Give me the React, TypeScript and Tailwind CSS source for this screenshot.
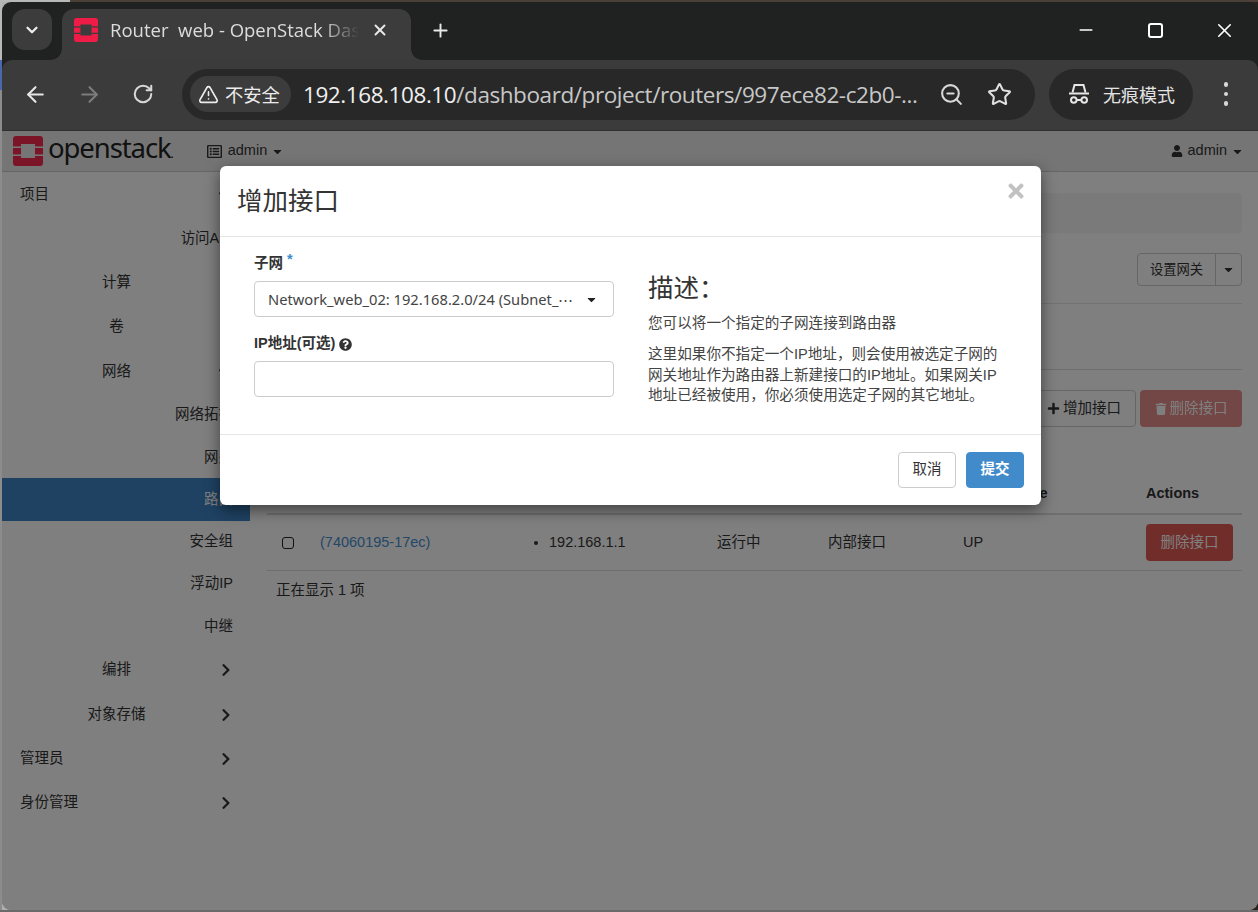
import { ArrowLeft, ArrowRight, RotateCw, TriangleAlert, Star, X, Plus, Minus, ChevronDown, ZoomOut } from "lucide-react";
import { FaRegListAlt, FaUser, FaCaretDown, FaChevronRight, FaChevronDown, FaPlus, FaTrash, FaQuestionCircle, FaTimes } from "react-icons/fa";

function Logo({ className, gap }: { className: string; gap: string }) {
  return (
    <svg viewBox="0 0 30 30" className={className}>
      <path fillRule="evenodd" fill="currentColor" d="M3 0h24a3 3 0 0 1 3 3v24a3 3 0 0 1-3 3H3a3 3 0 0 1-3-3V3a3 3 0 0 1 3-3zM8 8v14h14V8z" />
      <rect x="0" y="10.4" width="8" height="1.6" fill={gap} />
      <rect x="0" y="18.4" width="8" height="1.6" fill={gap} />
      <rect x="22" y="10.4" width="8" height="1.6" fill={gap} />
      <rect x="22" y="18.4" width="8" height="1.6" fill={gap} />
    </svg>
  );
}

function Incognito() {
  return (
    <svg viewBox="0 0 24 24" className="w-[24px] h-[24px] text-[#e6e6e6]" fill="none" stroke="currentColor" strokeWidth="2">
      <path d="M5.5 10.5 7.5 3h9l2 7.5" />
      <path d="M2 11.5h20" />
      <circle cx="6.8" cy="18" r="2.8" />
      <circle cx="17.2" cy="18" r="2.8" />
      <path d="M9.6 18h4.8" />
    </svg>
  );
}

const nav: { t: string; lvl: 1 | 2 | 3; h: string; arrow?: "r" | "d"; active?: boolean }[] = [
  { t: "项目", lvl: 1, h: "h-[44px] pt-[2px]", arrow: "d" },
  { t: "访问API", lvl: 3, h: "h-[44px] pt-[2px]" },
  { t: "计算", lvl: 2, h: "h-[44px] pt-[2px]" },
  { t: "卷", lvl: 2, h: "h-[44px] pt-[2px]" },
  { t: "网络", lvl: 2, h: "h-[44px] pt-[4px]", arrow: "d" },
  { t: "网络拓扑", lvl: 3, h: "h-[43px] pt-[2px]" },
  { t: "网关", lvl: 3, h: "h-[43px] pt-[2px]" },
  { t: "路由", lvl: 3, h: "h-[43px]", active: true },
  { t: "安全组", lvl: 3, h: "h-[42px]" },
  { t: "浮动IP", lvl: 3, h: "h-[42px]" },
  { t: "中继", lvl: 3, h: "h-[43px]" },
  { t: "编排", lvl: 2, h: "h-[44px]", arrow: "r" },
  { t: "对象存储", lvl: 2, h: "h-[44px] pt-[2px]", arrow: "r" },
  { t: "管理员", lvl: 1, h: "h-[44px] pt-[2px]", arrow: "r" },
  { t: "身份管理", lvl: 1, h: "h-[44px] pt-[2px]", arrow: "r" },
];

const cols = "grid grid-cols-[45px_217px_180px_111px_135px_183px_104px] items-center";

export default function App() {
  return (
    <div className="w-[1258px] h-[912px] overflow-hidden flex flex-col bg-[#2a2420] [font-family:'Liberation_Sans','Noto_Sans_CJK_SC',sans-serif] text-[14.5px] text-[#333]">
      <div className="h-[2px] shrink-0 bg-[linear-gradient(90deg,#b8b8b8_70px,#4a4038_70px)]" />
      <div className="flex h-[908px] shrink-0 bg-[linear-gradient(90deg,#b0b0b0_50%,#2a2420_50%)]">
        <div className="w-[2px] shrink-0 flex flex-col">
          <div className="h-[58px] bg-[#b8b8b8]" />
          <div className="h-[30px] bg-[#4a67b0]" />
          <div className="flex-1 bg-[#8c8c8c]" />
        </div>
        <div className="flex-1 flex flex-col rounded-t-[9px] rounded-b-[9px] overflow-hidden bg-[#202221]">
          {/* tab strip */}
          <div className="h-[58px] shrink-0 flex pl-[10px] pt-[7px] [font-family:'Open_Sans','Noto_Sans_CJK_SC',sans-serif] text-[#dcdcdc]">
            <div className="w-[40px] h-[41px] rounded-[13px] bg-[#3c3c3c] flex items-center justify-center">
              <ChevronDown size={18} strokeWidth={3} className="text-[#eeeeee]" />
            </div>
            <div className="relative ml-[10px] w-[349px] h-[51px] rounded-t-[12px] bg-[#3c3c3c] flex items-center pl-[12px] pb-[9px]">
              <div className="absolute left-[-11px] bottom-0 w-[11px] h-[11px] bg-[radial-gradient(circle_at_0_0,#202221_10.5px,#3c3c3c_11px)]" />
              <div className="absolute right-[-11px] bottom-0 w-[11px] h-[11px] bg-[radial-gradient(circle_at_100%_0,#202221_10.5px,#3c3c3c_11px)]" />
              <Logo className="w-[24px] h-[24px] text-[#f01c48] shrink-0" gap="#3c3c3c" />
              <div className="ml-[12px] w-[249px] whitespace-pre overflow-hidden text-[18.5px] leading-[24px] [mask-image:linear-gradient(90deg,#000_85%,transparent)]">Router  web - OpenStack Dashboard</div>
              <X size={18} strokeWidth={2.6} className="ml-[12px] text-[#e8e8e8] shrink-0" />
            </div>
            <div className="ml-[19px] mt-[5px] h-[32px] flex items-center">
              <Plus size={21} strokeWidth={2.2} className="text-[#e8e8e8]" />
            </div>
            <div className="ml-auto flex h-[32px] mt-[5px] text-white">
              <div className="w-[64px] flex items-center justify-center"><Minus size={20} strokeWidth={1.7} /></div>
              <div className="w-[74px] flex items-center justify-center"><div className="w-[15px] h-[15px] border-[2px] border-white rounded-[3px]" /></div>
              <div className="w-[66px] flex items-center justify-center pr-[2px]"><X size={23} strokeWidth={1.7} /></div>
            </div>
          </div>
          {/* toolbar */}
          <div className="h-[71px] shrink-0 rounded-t-[10px] bg-[#3b3b3b] border-b border-b-[#2f2f2f] flex items-center pl-[6px] pb-[2px]">
            <div className="w-[54px] flex justify-center"><ArrowLeft size={25} strokeWidth={2} className="text-[#e6e6e6]" /></div>
            <div className="w-[54px] flex justify-center"><ArrowRight size={25} strokeWidth={2} className="text-[#7c7c7c]" /></div>
            <div className="w-[54px] flex justify-center"><RotateCw size={22} strokeWidth={2.2} className="text-[#d8d8d8]" /></div>
            <div className="ml-[12px] w-[853px] h-[51px] rounded-full bg-[#282828] flex items-center pl-[8px] [font-family:'Open_Sans','Noto_Sans_CJK_SC',sans-serif]">
              <div className="w-[101px] h-[36px] rounded-full bg-[#3c3c3c] flex items-center pl-[8px] text-[#ececec]">
                <TriangleAlert size={21} strokeWidth={1.8} />
                <span className="ml-[6px] mt-[2px] text-[18.3px] leading-none">不安全</span>
              </div>
              <div className="ml-[12px] mt-[1px] w-[618px] whitespace-nowrap text-[22.5px] tracking-[-0.43px] leading-[30px] text-[#c7c7c7]">
                <span className="text-[#f0f0f0]">192.168.108.10</span>/dashboard/project/routers/997ece82-c2b0-...
              </div>
              <ZoomOut size={25} strokeWidth={2} className="ml-[18px] text-[#d8d8d8]" />
              <Star size={25} strokeWidth={2} className="ml-[23px] text-[#e0e0e0]" />
            </div>
            <div className="ml-[14px] w-[144px] h-[51px] rounded-full bg-[#282828] flex items-center pl-[18px] text-[#e3e3e3]">
              <Incognito />
              <span className="ml-[12px] mt-[2px] text-[18px] leading-none [font-family:'Open_Sans','Noto_Sans_CJK_SC',sans-serif]">无痕模式</span>
            </div>
            <div className="ml-[21px] w-[24px] flex flex-col items-center gap-[5px]">
              <div className="w-[4.5px] h-[4.5px] rounded-full bg-[#d8d8d8]" />
              <div className="w-[4.5px] h-[4.5px] rounded-full bg-[#d8d8d8]" />
              <div className="w-[4.5px] h-[4.5px] rounded-full bg-[#d8d8d8]" />
            </div>
          </div>
          {/* page */}
          <div className="relative flex-1 bg-white flex flex-col overflow-hidden">
            <div className="h-[41px] shrink-0 bg-[#ebebeb] border-b border-b-[#cccccc] flex items-center pl-[11px] pr-[14px]">
              <Logo className="w-[30px] h-[30px] text-[#f7284f]" gap="#ebebeb" />
              <span className="ml-[5px] text-[27.5px] leading-[36px] tracking-[-1.1px] text-[#222] [font-family:'Noto_Sans',sans-serif]">openstack<span className="text-[12px]">.</span></span>
              <FaRegListAlt size={15} className="ml-[34px]" />
              <span className="ml-[6px]">admin</span>
              <FaCaretDown size={13} className="ml-[4px]" />
              <FaUser size={12} className="ml-auto" />
              <span className="ml-[5px]">admin</span>
              <FaCaretDown size={13} className="ml-[4px]" />
            </div>
            <div className="flex-1 flex">
              <div className="w-[248px] shrink-0 flex flex-col">
                {nav.map((n) => (
                  <div key={n.t} className={`${n.h} flex items-center ${n.active ? "bg-[#3f85c7] text-white" : ""}`}>
                    {n.lvl === 1 && <div className="w-[229px] pl-[18px]">{n.t}</div>}
                    {n.lvl === 2 && <div className="w-[229px] text-center">{n.t}</div>}
                    {n.lvl === 3 && <div className="w-[231px] text-right">{n.t}</div>}
                    {n.arrow === "r" && <FaChevronRight size={14} className="-ml-[12px]" />}
                    {n.arrow === "d" && <FaChevronDown size={13} className="-ml-[13px]" />}
                  </div>
                ))}
              </div>
              <div className="flex-1 pl-[17px] pr-[16px] pt-[21px] flex flex-col">
                <div className="h-[40px] shrink-0 rounded-[4px] bg-[#f5f5f5]" />
                <div className="mt-[20px] h-[33px] shrink-0 flex justify-end">
                  <div className="w-[105px] rounded-[4px] border border-[#cccccc] flex">
                    <div className="w-[78px] border-r border-r-[#cccccc] flex items-center justify-center text-[13.3px]">设置网关</div>
                    <div className="flex-1 flex items-center justify-center"><FaCaretDown size={13} /></div>
                  </div>
                </div>
                <div className="mt-[17px] h-px shrink-0 bg-[#e5e5e5]" />
                <div className="mt-[65px] h-px shrink-0 bg-[#dddddd]" />
                <div className="mt-[20px] h-[37px] shrink-0 flex justify-end gap-[4px]">
                  <div className="w-[105px] rounded-[4px] border border-[#cccccc] flex items-center pl-[15px] gap-[3px]"><FaPlus size={13} />增加接口</div>
                  <div className="w-[102px] rounded-[4px] bg-[#d9534f] opacity-65 text-white flex items-center justify-center gap-[3px]"><FaTrash size={12} />删除接口</div>
                </div>
                <div className={`${cols} mt-[45px] h-[43px] pt-[3px] shrink-0 border-b-2 border-b-[#dddddd] font-bold`}>
                  <div />
                  <div className="pl-[8px]">Name</div>
                  <div className="pl-[8px]">Fixed IPs</div>
                  <div className="pl-[8px]">Status</div>
                  <div className="pl-[8px]">Type</div>
                  <div className="pl-[8px]">Admin State</div>
                  <div className="pl-[8px]">Actions</div>
                </div>
                <div className={`${cols} h-[56px] shrink-0 border-b border-b-[#dddddd]`}>
                  <div className="pl-[15px]"><div className="w-[12px] h-[12px] rounded-[3px] border-[1.5px] border-[#222]" /></div>
                  <div className="pl-[8px] text-[#4a8fd0]">(74060195-17ec)</div>
                  <div className="pl-[8px] flex items-center"><span className="-ml-[3px] w-[4px] h-[4px] rounded-full bg-[#333] mr-[11px]" />192.168.1.1</div>
                  <div className="pl-[8px]">运行中</div>
                  <div className="pl-[8px]">内部接口</div>
                  <div className="pl-[8px]">UP</div>
                  <div className="pl-[8px]"><div className="w-[87px] h-[37px] rounded-[4px] bg-[#e35a55] text-white flex items-center justify-center">删除接口</div></div>
                </div>
                <div className="mt-[9px] pl-[9px] leading-[20px]">正在显示 1 项</div>
              </div>
            </div>
            {/* backdrop */}
            <div className="absolute inset-0 bg-black/50" />
            {/* modal */}
            <div className="absolute left-[218px] top-[35px] w-[821px] h-[339px] rounded-[6px] bg-white shadow-[0_5px_15px_rgba(0,0,0,0.5)] flex flex-col">
              <div className="h-[71px] shrink-0 border-b border-b-[#e5e5e5] flex items-center pl-[17px] pr-[14px] pb-[1px]">
                <div className="text-[25.5px] leading-[30px] text-[#333]">增加接口</div>
                <FaTimes size={22} className="ml-auto mb-[20px] text-[#c2c2c2]" />
              </div>
              <div className="h-[198px] shrink-0 border-b border-b-[#e5e5e5] flex pl-[34px]">
                <div className="w-[360px] pt-[17px] flex flex-col">
                  <div className="h-[20px] font-bold text-[14.5px] flex items-center">子网<span className="ml-[4px] -mt-[8px] text-[#3f8ccc]">*</span></div>
                  <div className="mt-[7px] h-[36px] rounded-[4px] border border-[#cccccc] flex items-center pl-[13px] pr-[15px] text-[14.7px] text-[#444] [font-family:'Noto_Sans',sans-serif]">
                    <span className="whitespace-nowrap">Network_web_02: 192.168.2.0/24 (Subnet_⋯</span>
                    <FaCaretDown size={13} className="ml-auto text-[#222]" />
                  </div>
                  <div className="mt-[17px] h-[20px] font-bold text-[14.5px] flex items-center">IP地址(可选)<FaQuestionCircle size={13} className="ml-[4px]" /></div>
                  <div className="mt-[7px] h-[36px] rounded-[4px] border border-[#cccccc]" />
                </div>
                <div className="ml-[34px] w-[355px] pt-[33px] flex flex-col text-[14.6px] text-[#444]">
                  <div className="h-[36px] text-[25.5px] leading-[36px] text-[#333]">描述：</div>
                  <div className="mt-[7px] h-[20px] leading-[20px]">您可以将一个指定的子网连接到路由器</div>
                  <div className="mt-[11px] leading-[20.5px]">这里如果你不指定一个IP地址，则会使用被选定子网的网关地址作为路由器上新建接口的IP地址。如果网关IP地址已经被使用，你必须使用选定子网的其它地址。</div>
                </div>
              </div>
              <div className="flex-1 flex justify-end gap-[10px] pt-[17px] pr-[17px]">
                <div className="w-[58px] h-[36px] rounded-[4px] border border-[#cccccc] flex items-center justify-center text-[#333]">取消</div>
                <div className="w-[58px] h-[36px] rounded-[4px] bg-[#428bca] border border-[#3f8ccc] flex items-center justify-center text-white font-bold">提交</div>
              </div>
            </div>
          </div>
        </div>
      </div>
      <div className="h-[2px] shrink-0 bg-[#6a6a6a]" />
    </div>
  );
}
